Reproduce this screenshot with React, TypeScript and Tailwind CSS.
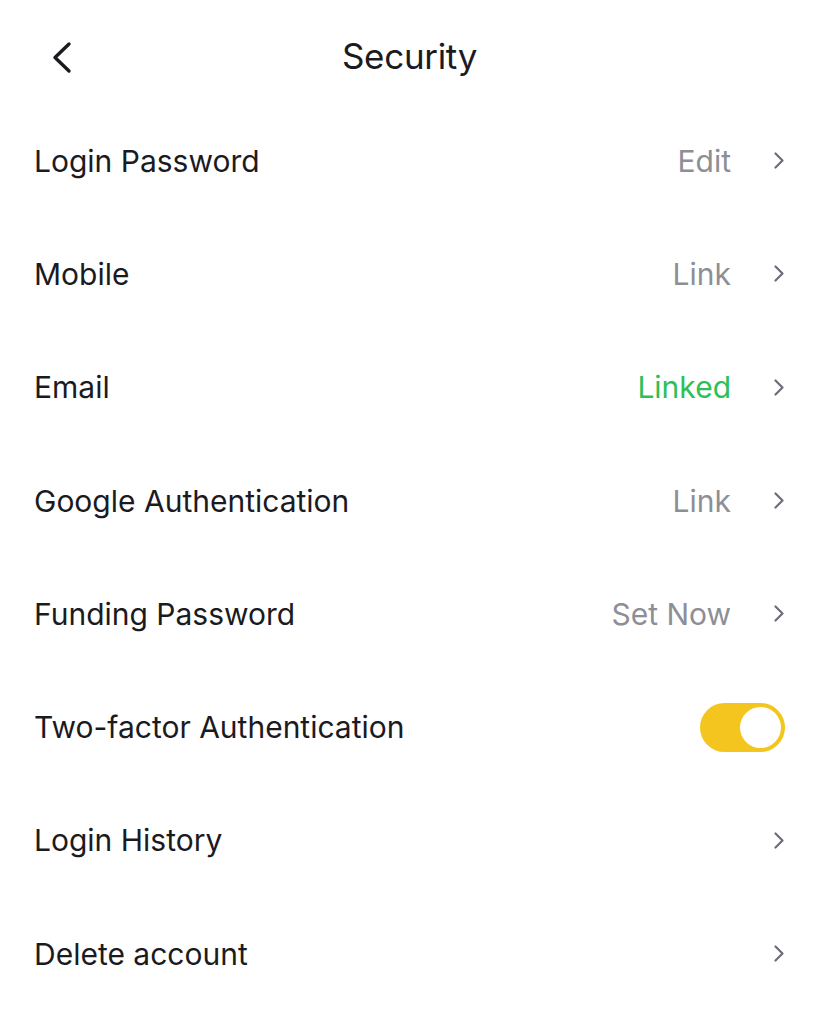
import React from 'react';

type Row = {
  label: string;
  value?: string;
  tone?: 'muted' | 'success';
  toggle?: boolean;
  arrow?: boolean;
};

const rows: Row[] = [
  { label: 'Login Password', value: 'Edit', arrow: true },
  { label: 'Mobile', value: 'Link', arrow: true },
  { label: 'Email', value: 'Linked', tone: 'success', arrow: true },
  { label: 'Google Authentication', value: 'Link', arrow: true },
  { label: 'Funding Password', value: 'Set Now', arrow: true },
  { label: 'Two-factor Authentication', toggle: true },
  { label: 'Login History', arrow: true },
  { label: 'Delete account', arrow: true },
];

const ChevronRight = () => (
  <svg width="12" height="17" viewBox="0 0 12 17" fill="none" className="shrink-0">
    <path d="M2.5 1.5L9.5 8.5L2.5 15.5" stroke="#6d6d7c" strokeWidth="2.2" strokeLinecap="round" strokeLinejoin="round" />
  </svg>
);

const Toggle = ({ on }: { on: boolean }) => (
  <div
    className={`w-[85px] h-[49px] rounded-full flex items-center px-[4px] ${
      on ? 'bg-[#f5c51f] justify-end' : 'bg-gray-300 justify-start'
    }`}
  >
    <div className="w-[41px] h-[41px] rounded-full bg-white" />
  </div>
);

const App: React.FC = () => {
  return (
    <div className="w-[819px] min-h-[1024px] bg-white text-[#1b1b1f]" style={{ fontFamily: 'Inter, "Noto Sans", sans-serif' }}>
      {/* Header */}
      <div className="relative h-[104px] flex items-center justify-center pt-[8px]">
        <button className="absolute left-[48px] top-[39px] p-[2px]">
          <svg width="24" height="34" viewBox="0 0 24 34" fill="none">
            <path d="M19 3L5 16.5L19 30" stroke="#1b1b1f" strokeWidth="3.4" strokeLinecap="round" strokeLinejoin="round" />
          </svg>
        </button>
        <h1 className="text-[35px] font-normal tracking-[-0.3px] leading-none">Security</h1>
      </div>

      {/* Rows */}
      <div className="flex flex-col">
        {rows.map((row) => (
          <div key={row.label} className="h-[113.3px] flex items-center justify-between pl-[34px] pr-[34px]">
            <span className="text-[30px] leading-none">{row.label}</span>
            {row.toggle ? (
              <Toggle on />
            ) : (
              <div className="flex items-center gap-[42px]">
                {row.value && (
                  <span
                    className={`text-[30px] leading-none ${
                      row.tone === 'success' ? 'text-[#2fbf58]' : 'text-[#8e8e96]'
                    }`}
                  >
                    {row.value}
                  </span>
                )}
                {row.arrow && <ChevronRight />}
              </div>
            )}
          </div>
        ))}
      </div>
    </div>
  );
};

export default App;
